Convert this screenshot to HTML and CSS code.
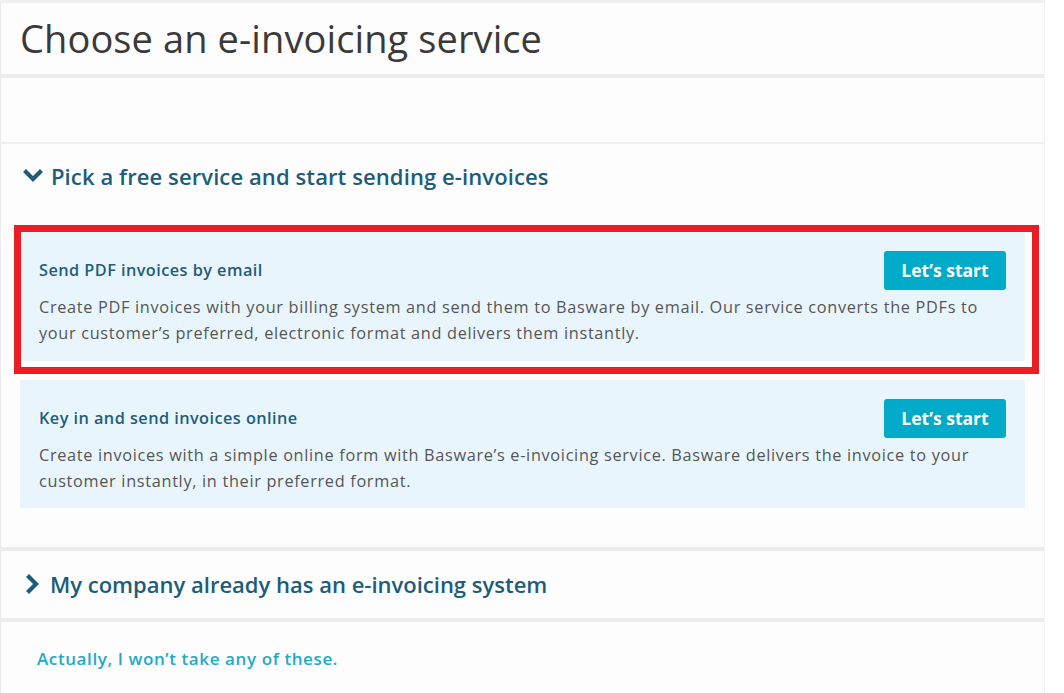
FILE: index.html
```html
<!DOCTYPE html>
<html lang="en">
<head>
<meta charset="utf-8">
<title>Choose an e-invoicing service</title>
<link rel="stylesheet" href="styles.css">
</head>
<body>
<div class="panel">
  <header class="page-header">
    <h1 class="page-title">Choose an e-invoicing service</h1>
  </header>
  <div class="divider thick"></div>
  <div class="blank"></div>
  <div class="divider thin"></div>
  <section class="section open">
    <h2 class="section-title">
      <svg class="chev" width="20" height="14" viewBox="0 0 20 14"><path d="M3 3 L10 10 L17 3" fill="none" stroke="#1b5d7a" stroke-width="4.2" stroke-linecap="square"/></svg>
      <span>Pick a free service and start sending e-invoices</span>
    </h2>
    <div class="cards">
      <div class="card highlighted">
        <div class="card-head">
          <h3 class="card-title">Send PDF invoices by email</h3>
          <button class="btn">Let’s start</button>
        </div>
        <p class="card-text">Create PDF invoices with your billing system and send them to Basware by email. Our service converts the PDFs to your customer’s preferred, electronic format and delivers them instantly.</p>
        <span class="highlight-frame"></span>
      </div>
      <div class="card">
        <div class="card-head">
          <h3 class="card-title">Key in and send invoices online</h3>
          <button class="btn">Let’s start</button>
        </div>
        <p class="card-text">Create invoices with a simple online form with Basware’s e-invoicing service. Basware delivers the invoice to your customer instantly, in their preferred format.</p>
      </div>
    </div>
  </section>
  <div class="divider thick"></div>
  <section class="section closed">
    <h2 class="section-title">
      <svg class="chev" width="20" height="20" viewBox="0 0 20 20"><path d="M6 3 L13 10 L6 17" fill="none" stroke="#1b5d7a" stroke-width="4.2" stroke-linecap="square"/></svg>
      <span>My company already has an e-invoicing system</span>
    </h2>
  </section>
  <div class="divider thick"></div>
  <footer class="footer">
    <a class="skip-link" href="#">Actually, I won’t take any of these.</a>
  </footer>
</div>
</body>
</html>
```
FILE: styles.css
```css
* { box-sizing: border-box; }
html, body { margin: 0; padding: 0; background: #ffffff; }
body { font-family: "Open Sans", "Noto Sans", sans-serif; color: #555; }

.panel {
  width: 1045px;
  height: 693px;
  background: #fdfdfd;
  border-left: 1px solid #ececec;
  border-right: 1px solid #f2f2f2;
  border-top: 3px solid #f0f0f0;
  overflow: hidden;
}

.page-header {
  height: 71px;
  display: flex;
  align-items: center;
  padding-left: 19px;
}
.page-title {
  margin: 0;
  font-size: 38px;
  font-weight: 400;
  color: #3a3a3a;
  letter-spacing: 0.1px;
  line-height: 46px;
  padding-bottom: 2px;
}

.divider { background: #ececec; }
.divider.thick { height: 4px; }
.divider.thin { height: 2px; background: #efefef; }

.blank { height: 64px; }

.section { padding: 0 19px 0 19px; }
.section.open { padding-top: 17px; padding-bottom: 39px; }
.section.closed { padding-top: 18px; padding-bottom: 19px; }

.section-title {
  margin: 0;
  display: flex;
  align-items: center;
  gap: 8px;
  height: 30px;
  font-size: 22px;
  font-weight: 600;
  letter-spacing: 0.1px;
  color: #1b5d7a;
  padding-left: 3px;
}
.section.closed .section-title { gap: 7px; letter-spacing: 0; }
.chev { flex: none; }

.cards {
  margin-top: 41px;
  display: flex;
  flex-direction: column;
  gap: 19px;
}
.card {
  position: relative;
  background: #e9f5fd;
  padding: 19px 19px 15px 19px;
  height: 129px;
}
.card + .card { height: 128px; }

.card-head {
  display: flex;
  justify-content: space-between;
  align-items: center;
  height: 38px;
}
.card-title {
  margin: 0;
  font-size: 16.3px;
  font-weight: 600;
  letter-spacing: 0.45px;
  color: #1f5d78;
}
.btn {
  height: 39px;
  width: 122px;
  border: none;
  border-radius: 3px;
  background: #00abca;
  color: #ffffff;
  font-family: "Open Sans", "Noto Sans", sans-serif;
  font-size: 17.5px;
  font-weight: 700;
  letter-spacing: 0;
  padding: 0;
  cursor: pointer;
}
.card-text {
  margin: 5px 0 0 0;
  font-size: 16.3px;
  letter-spacing: 0.68px;
  line-height: 26px;
  color: #555555;
}

.highlight-frame {
  position: absolute;
  top: -7px;
  left: -6px;
  right: -14px;
  bottom: -13px;
  border: 7px solid #ec1c24;
  pointer-events: none;
}

.footer {
  padding: 26px 0 0 36px;
}
.skip-link {
  display: inline-block;
  font-size: 17px;
  line-height: 22px;
  font-weight: 600;
  letter-spacing: 0.6px;
  color: #1eaac9;
  text-decoration: none;
}
```
